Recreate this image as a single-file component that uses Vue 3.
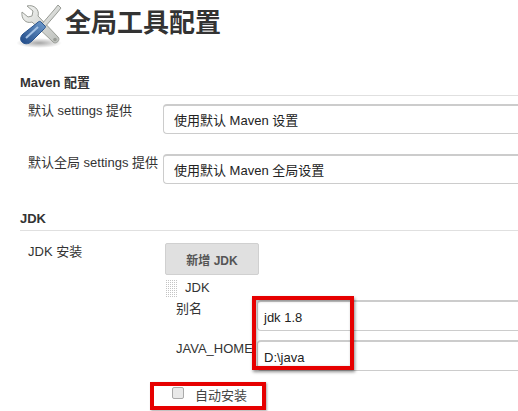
<script setup>
const mavenRows = [
  { label: '默认 settings 提供', value: '使用默认 Maven 设置' },
  { label: '默认全局 settings 提供', value: '使用默认 Maven 全局设置' }
]
const jdkFields = [
  { label: '别名', value: 'jdk 1.8' },
  { label: 'JAVA_HOME', value: 'D:\\java' }
]
const dots = Array.from({ length: 54 })
</script>

<template>
  <div class="page">
    <header class="title">
      <svg class="logo" width="46" height="46" viewBox="0 0 46 46">
        <defs>
          <linearGradient id="metal" x1="0" y1="0" x2="1" y2="1">
            <stop offset="0" stop-color="#f4f5f3" />
            <stop offset="1" stop-color="#bcbfbb" />
          </linearGradient>
          <linearGradient id="blue" x1="1" y1="0" x2="0" y2="1">
            <stop offset="0" stop-color="#6f9bcc" />
            <stop offset="1" stop-color="#204a87" />
          </linearGradient>
          <radialGradient id="shade">
            <stop offset="0" stop-color="#000" stop-opacity=".35" />
            <stop offset="1" stop-color="#000" stop-opacity="0" />
          </radialGradient>
        </defs>
        <ellipse cx="22" cy="40" rx="23" ry="5" fill="url(#shade)" />
        <path d="M10 3 L16 8 L15 13 L11 14 L5 9 C4 16 9 21 15 19 L36 39 C39 42 44 37 41 34 L21 13 C23 7 17 1 10 3 Z" fill="url(#metal)" stroke="#999c96" stroke-width="1" />
        <circle cx="38" cy="36.500" r="1.800" fill="#999c96" />
        <path d="M37 7 L41 2 L44 5 L40 10 L27 25 L24 22 Z" fill="url(#metal)" stroke="#999c96" stroke-width="1" />
        <path d="M24 19 L28 23 C29 24 28 25 27 26 L15 38 C11 42 7 41 5 39 C3 37 3 34 6 31 L20 20 C22 18 23 18 24 19 Z" fill="url(#blue)" stroke="#2a558f" stroke-width="1" />
        <path d="M9 35 L21 24" stroke="#a8c5e6" stroke-width="2" fill="none" />
      </svg>
      <h1>全局工具配置</h1>
    </header>

    <section class="maven">
      <h2>Maven 配置</h2>
      <div v-for="row in mavenRows" :key="row.label" class="row">
        <span class="label">{{ row.label }}</span>
        <div class="select">{{ row.value }}</div>
      </div>
    </section>

    <section class="jdk">
      <h2>JDK</h2>
      <div class="install">
        <span class="label">JDK 安装</span>
        <div class="body">
          <button class="add">新增 JDK</button>
          <div class="item-head">
            <div class="handle"><i v-for="(d, i) in dots" :key="i"></i></div>
            <span>JDK</span>
          </div>
          <div class="fields">
            <div v-for="f in jdkFields" :key="f.label" class="field">
              <span class="field-label">{{ f.label }}</span>
              <div class="input">{{ f.value }}</div>
            </div>
            <div class="mark mark-fields"></div>
          </div>
          <label class="auto">
            <span class="check"></span>
            <span>自动安装</span>
            <div class="mark mark-auto"></div>
          </label>
        </div>
      </div>
    </section>
  </div>
</template>

<style>
html, body { margin: 0; background: #fff; overflow: hidden; }
</style>

<style scoped>
.page {
  width: 518px;
  height: 411px;
  overflow: hidden;
  padding-left: 20px;
  box-sizing: border-box;
  color: #333;
  font: 13px/18px "Liberation Sans", "Noto Sans CJK SC", sans-serif;
}
.title {
  display: flex;
  align-items: flex-start;
  height: 74px;
  padding-top: 2px;
  box-sizing: border-box;
}
.logo { flex: none; margin: 1px 0 0 -3px; }
h1 {
  margin: 1px 0 0 2px;
  font-size: 26px;
  line-height: 40px;
  font-weight: 700;
  color: #333;
}
h2 {
  margin: 0;
  height: 21px;
  font-size: 13px;
  line-height: 18px;
  font-weight: 700;
  border-bottom: 1px solid #e0e0e0;
}
.row {
  display: flex;
  margin-left: 8px;
  height: 50px;
  padding-top: 8px;
  box-sizing: border-box;
}
.row .label { width: 135px; flex: none; white-space: nowrap; margin-top: -2px; }
.row + .row .label { margin-top: 0; }
.select {
  flex: 1;
  height: 30px;
  box-sizing: border-box;
  border: 1px solid #ccc;
  border-top-width: 2px;
  border-right: 0;
  border-radius: 4px 0 0 4px;
  padding: 5px 0 0 10px;
  color: #222;
  line-height: 20px;
}
.jdk { margin-top: 14px; }
.jdk h2 { height: 20px; }
.install {
  display: flex;
  margin-left: 8px;
  padding-top: 12px;
}
.install .label { width: 137px; flex: none; }
.body { flex: 1; }
.add {
  display: block;
  width: 94px;
  height: 32px;
  padding: 0;
  border: 1px solid #d0d0d0;
  border-radius: 2px;
  background: #e0e0e0;
  color: #555;
  font: 700 12px "Liberation Sans", "Noto Sans CJK SC", sans-serif;
}
.item-head {
  display: flex;
  align-items: center;
  height: 18px;
  margin-top: 4px;
  margin-left: 1px;
}
.item-head span { margin-left: 8px; }
.handle {
  width: 11px;
  display: grid;
  grid-template-columns: repeat(6, 1px);
  grid-auto-rows: 1px;
  gap: 1px;
  height: 17px;
  flex: none;
}
.handle i { background: #c4c4c4; }
.fields {
  position: relative;
  margin-top: 3px;
  margin-right: -40px;
}
.field {
  display: flex;
  height: 40px;
  margin-left: 11px;
}
.field-label { width: 81px; flex: none; }
.input {
  flex: 1;
  height: 31px;
  box-sizing: border-box;
  border: 1px solid #ccc;
  border-right: 0;
  border-top-width: 2px;
  border-radius: 4px 0 0 4px;
  padding: 7px 0 0 6px;
  color: #222;
  line-height: 18px;
}
.mark {
  position: absolute;
  box-sizing: border-box;
  border: 4px solid #e60000;
  box-shadow: 1px 2px 3px rgba(0, 0, 0, .45), inset 1px 1px 3px rgba(0, 0, 0, .35);
  pointer-events: none;
}
.mark-fields { left: 87px; top: -4px; width: 102px; height: 74px; }
.auto {
  position: relative;
  display: flex;
  align-items: center;
  margin: 2px 0 0 7px;
  height: 28px;
  color: #444;
}
.check {
  width: 12px;
  height: 12px;
  box-sizing: border-box;
  border: 1px solid #aaa;
  border-radius: 2px;
  background: #e9e9e9;
  margin-right: 11px;
  position: relative;
  top: -3px;
}
.mark-auto { left: -22px; top: 0; width: 116px; height: 28px; box-shadow: 1px 1px 2px rgba(0,0,0,.35); }
</style>
